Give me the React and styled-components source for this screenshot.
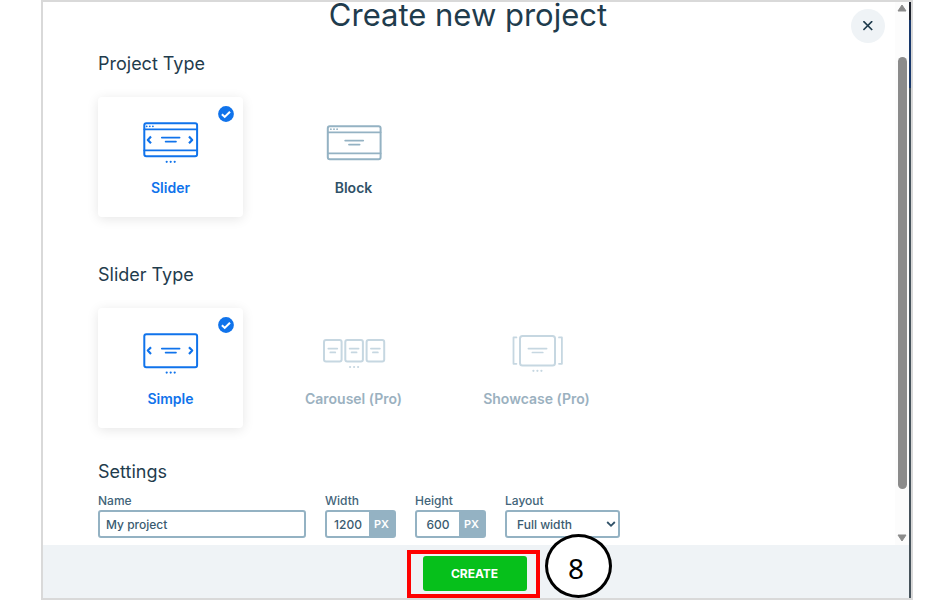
import React, { useState } from "react";
import styled, { createGlobalStyle } from "styled-components";

const GlobalStyle = createGlobalStyle`
  * {
    box-sizing: border-box;
  }
  body {
    margin: 0;
    background: #fff;
    color: #1f3c4d;
    font-family: Inter, "Liberation Sans", sans-serif;
  }
`;

const Frame = styled.div`
  display: flex;
  margin: 0 16px 0 41px;
  border: 2px solid #d9d9d9;
`;

const Modal = styled.main`
  flex: 1;
  min-width: 0;
`;

const Edge = styled.div`
  width: 2px;
  background: linear-gradient(#1c212c 18px, #17376b 18px, #17376b 86px, #46525b 86px);
`;

const Viewport = styled.div`
  display: flex;
`;

const Body = styled.div`
  position: relative;
  flex: 1;
  min-width: 0;
  padding-bottom: 7px;
`;

const Title = styled.h1`
  margin: 0 0 25px;
  padding-right: 2px;
  font-size: 31px;
  font-weight: 400;
  line-height: 25px;
  text-align: center;
`;

const CloseButton = styled.button`
  position: absolute;
  top: 7px;
  right: 10px;
  display: flex;
  align-items: center;
  justify-content: center;
  width: 34px;
  height: 34px;
  padding: 0;
  border: 0;
  border-radius: 50%;
  background: #eff3f6;
  color: #1f3c4d;
`;

const Section = styled.section`
  padding: 0 55px;
  margin-bottom: ${props => props.$space || 0}px;
`;

const SectionTitle = styled.h2`
  margin: 0 0 ${props => props.$gap}px;
  font-size: 18px;
  font-weight: 400;
  line-height: 24px;
`;

const Cards = styled.div`
  display: flex;
  gap: 38px;
`;

const SCard = styled.label`
  position: relative;
  display: flex;
  flex-direction: column;
  align-items: center;
  width: 145px;
  height: 120px;
  padding-top: 24px;
  border-radius: 4px;
  color: ${props => (props.$active ? "#1073eb" : props.$pro ? "#9bb1bf" : "#305168")};
  box-shadow: ${props => (props.$active ? "0 2px 12px rgba(0, 0, 0, 0.1)" : "none")};
`;

const CardRadio = styled.input`
  position: absolute;
  appearance: none;
  margin: 0;
`;

const CardName = styled.span`
  margin-top: 13px;
  font-size: 14px;
  font-weight: 600;
  line-height: 20px;
  white-space: nowrap;
`;

const Badge = styled.svg`
  position: absolute;
  top: 9px;
  right: 9px;
`;

const Fields = styled.div`
  display: flex;
  gap: 19px;
`;

const Field = styled.div`
  display: flex;
  flex-direction: column;
  gap: 1px;
  width: ${props => props.$width}px;
`;

const FieldLabel = styled.label`
  color: #426479;
  font-size: 12px;
  font-weight: 500;
  line-height: 16px;
`;

const controlBox = `
  width: 100%;
  height: 28px;
  border: 2px solid #94b2c3;
  border-radius: 3px;
  background: #fff;
  color: #3a5b70;
  font-family: inherit;
  font-size: 12px;
  font-weight: 500;
`;

const TextInput = styled.input`
  ${controlBox}
  padding: 0 6px;
`;

const UnitBox = styled.div`
  ${controlBox}
  display: flex;
`;

const UnitInput = styled.input`
  flex: 1;
  min-width: 0;
  padding: 0;
  border: 0;
  background: none;
  color: inherit;
  font: inherit;
  text-align: center;
`;

const Unit = styled.span`
  width: 25px;
  background: #94b2c3;
  color: #fff;
  font-size: 11px;
  font-weight: 600;
  line-height: 24px;
  text-align: center;
`;

const SelectWrap = styled.div`
  position: relative;
`;

const Select = styled.select`
  ${controlBox}
  display: block;
  padding: 0 10px;
  appearance: none;
`;

const SelectArrow = styled.svg`
  position: absolute;
  top: 10px;
  right: 4px;
  pointer-events: none;
`;

const Track = styled.div`
  display: flex;
  flex-direction: column;
  align-items: center;
  width: 14px;
  padding: 2px 0 3px;
  background: #fcfcfc;
`;

const Thumb = styled.div`
  flex: 1;
  width: 9px;
  margin: 45px 0;
  border-radius: 5px;
  background: #8b8b8b;
`;

const Footer = styled.footer`
  display: flex;
  justify-content: center;
  padding: 5px 6px 0 0;
  background: #eff3f6;
`;

const Highlight = styled.div`
  position: relative;
  padding: 2px 9px 3px 12px;
  border: 4px solid #fe0000;
`;

const CreateButton = styled.button`
  display: block;
  width: 104px;
  height: 35px;
  padding: 0;
  border: 0;
  border-radius: 3px;
  background: #06c01b;
  color: #fff;
  font-family: inherit;
  font-size: 12px;
  font-weight: 700;
`;

const Step = styled.div`
  position: absolute;
  bottom: -4px;
  left: 134px;
  width: 67px;
  height: 64px;
  border: 3px solid #000;
  border-radius: 50%;
  background: #fff;
  color: #000;
  font-family: "Noto Sans", sans-serif;
  font-size: 28px;
  line-height: 62px;
  padding-right: 4px;
  text-align: center;
`;

const Icon = ({ color, children }) => (
  <svg
    width="65"
    height="44"
    viewBox="0 0 65 44"
    fill="none"
    stroke={color}
    strokeWidth="2"
    strokeLinecap="round"
    strokeLinejoin="round"
    aria-hidden="true"
  >
    {children}
  </svg>
);

const Dots = ({ x, y, step = 4, r = 1, color }) => (
  <g fill={color} stroke="none">
    {[-1, 0, 1].map(i => (
      <circle key={i} cx={x + i * step} cy={y} r={r} />
    ))}
  </g>
);

const BLUE = "#1073eb";
const GREY = "#94b2c3";
const PALE = "#c6d7e1";

const SliderIcon = () => (
  <Icon color={BLUE}>
    <rect x="6.3" y="2.3" width="52.8" height="33" rx="2" />
    <path d="M6.3 8.3h52.8M6.3 29.4h52.8" strokeWidth="1.8" />
    <path d="M23.8 16.6h17.8M27.6 20.6h10.4" strokeWidth="1.7" />
    <path d="M13 15.6l-3.2 3.3 3.2 3.3M51 15.6l3.2 3.3-3.2 3.3" strokeWidth="2.2" strokeLinecap="butt" />
    <Dots x={11.8} y={5.3} step={3.1} r={0.9} color={BLUE} />
    <Dots x={32.7} y={40.8} r={1.1} color={BLUE} />
  </Icon>
);

const SimpleIcon = () => (
  <Icon color={BLUE}>
    <rect x="6.3" y="2.3" width="52.8" height="33" rx="2" />
    <path d="M23.8 16.6h17.8M27.6 20.6h10.4" strokeWidth="1.7" />
    <path d="M13 15.3l-3.2 3.3 3.2 3.3M51 15.3l3.2 3.3-3.2 3.3" strokeWidth="2.2" strokeLinecap="butt" />
    <Dots x={32.7} y={40.6} r={1.1} color={BLUE} />
  </Icon>
);

const BlockIcon = () => (
  <Icon color={GREY}>
    <rect x="6.8" y="5.3" width="52.8" height="33" rx="2" />
    <path d="M6.8 11.3h52.8M6.8 32.4h52.8" strokeWidth="1.8" />
    <path d="M24.2 19.6h18M28 23.6h10.6" strokeWidth="1.8" />
    <Dots x={13} y={8.2} step={3.1} r={0.9} color={GREY} />
  </Icon>
);

const CarouselIcon = () => (
  <Icon color={PALE}>
    {[3, 24.3, 45.6].map(x => (
      <g key={x}>
        <rect x={x} y="8" width="17.6" height="21.4" rx="2" />
        <path d={`M${x + 4.3} 16.6h9M${x + 6.3} 20.4h5`} strokeWidth="1.7" />
      </g>
    ))}
    <Dots x={33.1} y={35} r={1.1} color={PALE} />
  </Icon>
);

const ShowcaseIcon = () => (
  <Icon color={PALE}>
    <rect x="16" y="4" width="35" height="29.6" rx="2.5" />
    <path d="M24.4 16.6h18.2M28.4 20.5h10.4" strokeWidth="1.7" />
    <path d="M12.4 5.4h-2.9v26.4h2.9M55 5.4h2.9v26.4h-2.9" strokeWidth="1.8" />
    <Dots x={33.4} y={38.8} r={1.1} color={PALE} />
  </Icon>
);

const Card = ({ group, name, icon: CardIcon, pro, selected, onSelect }) => {
  const active = selected === name;
  return (
    <SCard $active={active} $pro={pro}>
      <CardRadio
        type="radio"
        name={group}
        checked={active}
        disabled={pro}
        onChange={() => onSelect(name)}
      />
      <CardIcon />
      <CardName>{pro ? `${name} (Pro)` : name}</CardName>
      {active && (
        <Badge width="16" height="16" viewBox="0 0 16 16" aria-hidden="true">
          <circle cx="8" cy="8" r="7.9" fill={BLUE} />
          <path d="M3.9 8.3l2.8 2.6 5.3-5.2" fill="none" stroke="#fff" strokeWidth="2.1" />
        </Badge>
      )}
    </SCard>
  );
};

const Size = ({ id, label, value }) => (
  <Field $width={71}>
    <FieldLabel htmlFor={id}>{label}</FieldLabel>
    <UnitBox>
      <UnitInput id={id} type="text" defaultValue={value} />
      <Unit>PX</Unit>
    </UnitBox>
  </Field>
);

const App = () => {
  const [project, setProject] = useState("Slider");
  const [slider, setSlider] = useState("Simple");

  return (
    <>
      <GlobalStyle />
      <Frame>
        <Modal>
          <Viewport>
            <Body>
              <Title>Create new project</Title>
              <CloseButton type="button" aria-label="Close">
                <svg width="10" height="10" viewBox="0 0 10 10" stroke="currentColor" strokeWidth="1.7">
                  <path d="M0.4 0.2l8.8 8.8M9.2 0.2l-8.8 8.8" />
                </svg>
              </CloseButton>
              <Section $space={46}>
                <SectionTitle $gap={21}>Project Type</SectionTitle>
                <Cards>
                  <Card group="project" name="Slider" icon={SliderIcon} selected={project} onSelect={setProject} />
                  <Card group="project" name="Block" icon={BlockIcon} selected={project} onSelect={setProject} />
                </Cards>
              </Section>
              <Section $space={32}>
                <SectionTitle $gap={21}>Slider Type</SectionTitle>
                <Cards>
                  <Card group="slider" name="Simple" icon={SimpleIcon} selected={slider} onSelect={setSlider} />
                  <Card group="slider" name="Carousel" icon={CarouselIcon} pro selected={slider} onSelect={setSlider} />
                  <Card group="slider" name="Showcase" icon={ShowcaseIcon} pro selected={slider} onSelect={setSlider} />
                </Cards>
              </Section>
              <Section>
                <SectionTitle $gap={9}>Settings</SectionTitle>
                <Fields>
                  <Field $width={208}>
                    <FieldLabel htmlFor="name">Name</FieldLabel>
                    <TextInput id="name" type="text" defaultValue="My project" />
                  </Field>
                  <Size id="width" label="Width" value="1200" />
                  <Size id="height" label="Height" value="600" />
                  <Field $width={115}>
                    <FieldLabel htmlFor="layout">Layout</FieldLabel>
                    <SelectWrap>
                      <Select id="layout" defaultValue="Full width">
                        <option>Full width</option>
                        <option>Boxed</option>
                      </Select>
                      <SelectArrow width="10" height="8" viewBox="0 0 10 8">
                        <path d="M1.2 2l3.8 3.8 3.8-3.8" fill="none" stroke="#305168" strokeWidth="1.8" />
                      </SelectArrow>
                    </SelectWrap>
                  </Field>
                </Fields>
              </Section>
            </Body>
            <Track aria-hidden="true">
              <svg width="10" height="8" viewBox="0 0 10 8">
                <path d="M5 1l4 6H1z" fill="#8b8b8b" stroke="#8b8b8b" strokeLinejoin="round" />
              </svg>
              <Thumb />
              <svg width="10" height="8" viewBox="0 0 10 8">
                <path d="M5 7L1 1h8z" fill="#8b8b8b" stroke="#8b8b8b" strokeLinejoin="round" />
              </svg>
            </Track>
          </Viewport>
          <Footer>
            <Highlight>
              <CreateButton type="button">CREATE</CreateButton>
              <Step>8</Step>
            </Highlight>
          </Footer>
        </Modal>
        <Edge />
      </Frame>
    </>
  );
};

export default App;
